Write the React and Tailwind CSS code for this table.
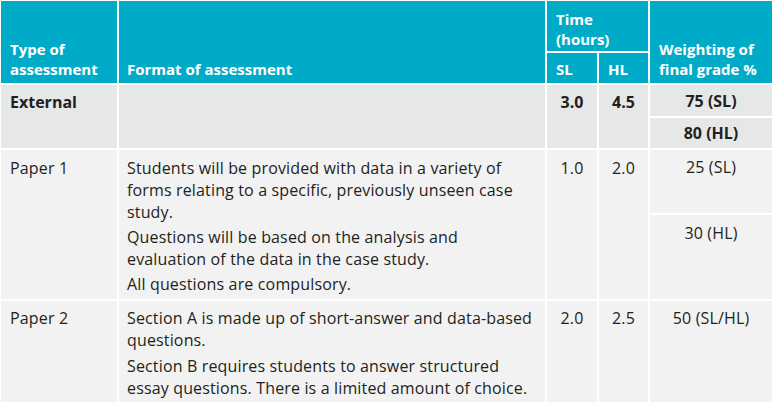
import React from "react";

const font = { fontFamily: '"Open Sans", "Noto Sans", sans-serif' };

function Lines({ lines }) {
  return (
    <div className="whitespace-nowrap">
      {lines.map((l, i) => (
        <div key={i}>{l}</div>
      ))}
    </div>
  );
}

export default function App() {
  const head = "bg-[#00abc8] text-white font-bold text-[15px] leading-[20px] px-[9px]";
  const ext = "bg-[#e6e7e7] font-bold text-[16px] leading-[22px] px-[9px]";
  const body = "bg-[#f2f2f2] text-[16px] leading-[22px] tracking-[0.15px] px-[9px]";
  return (
    <div className="bg-white w-[774px] min-h-[402px] pt-[1px] pl-[1px] text-[#231f20]" style={font}>
      <div className="grid gap-[2px] grid-cols-[116px_426px_50px_49px_122px] grid-rows-[50px_30px_31px_30px_63px_84px_auto]">
        {/* Header */}
        <div className={`${head} row-span-2 flex items-end pb-[4px]`}>
          <Lines lines={["Type of", "assessment"]} />
        </div>
        <div className={`${head} row-span-2 flex items-end pb-[4px] pl-[8px]`}>
          Format of assessment
        </div>
        <div className={`${head} col-span-2 pt-[8px] leading-[19px]`}>
          <Lines lines={["Time", "(hours)"]} />
        </div>
        <div className={`${head} row-span-2 flex items-end pb-[4px]`}>
          <Lines lines={["Weighting of", "final grade %"]} />
        </div>
        <div className={`${head} flex items-end pb-[4px]`}>SL</div>
        <div className={`${head} flex items-end pb-[4px]`}>HL</div>

        {/* External */}
        <div className={`${ext} row-span-2 pt-[6px]`}>External</div>
        <div className={`${ext} row-span-2`}></div>
        <div className={`${ext} row-span-2 pt-[6px] text-center`}>3.0</div>
        <div className={`${ext} row-span-2 pt-[6px] text-center`}>4.5</div>
        <div className={`${ext} flex items-center justify-center`}>75 (SL)</div>
        <div className={`${ext} flex items-center justify-center`}>80 (HL)</div>

        {/* Paper 1 */}
        <div className={`${body} row-span-2 pt-[7px]`}>Paper 1</div>
        <div className={`${body} row-span-2 pt-[7px] pl-[8px] flex flex-col gap-[3px]`}>
          <Lines
            lines={[
              "Students will be provided with data in a variety of",
              "forms relating to a specific, previously unseen case",
              "study.",
            ]}
          />
          <Lines
            lines={[
              "Questions will be based on the analysis and",
              "evaluation of the data in the case study.",
            ]}
          />
          <Lines lines={["All questions are compulsory."]} />
        </div>
        <div className={`${body} row-span-2 pt-[7px] text-center`}>1.0</div>
        <div className={`${body} row-span-2 pt-[7px] text-center`}>2.0</div>
        <div className={`${body} pt-[6px] text-center`}>25 (SL)</div>
        <div className={`${body} pt-[7px] text-center`}>30 (HL)</div>

        {/* Paper 2 */}
        <div className={`${body} pt-[6px]`}>Paper 2</div>
        <div className={`${body} pt-[6px] pb-[10px] pl-[8px] flex flex-col gap-[4px]`}>
          <Lines
            lines={[
              "Section A is made up of short-answer and data-based",
              "questions.",
            ]}
          />
          <Lines
            lines={[
              "Section B requires students to answer structured",
              "essay questions. There is a limited amount of choice.",
            ]}
          />
        </div>
        <div className={`${body} pt-[6px] text-center`}>2.0</div>
        <div className={`${body} pt-[6px] text-center`}>2.5</div>
        <div className={`${body} pt-[6px] text-center`}>50 (SL/HL)</div>
      </div>
    </div>
  );
}
